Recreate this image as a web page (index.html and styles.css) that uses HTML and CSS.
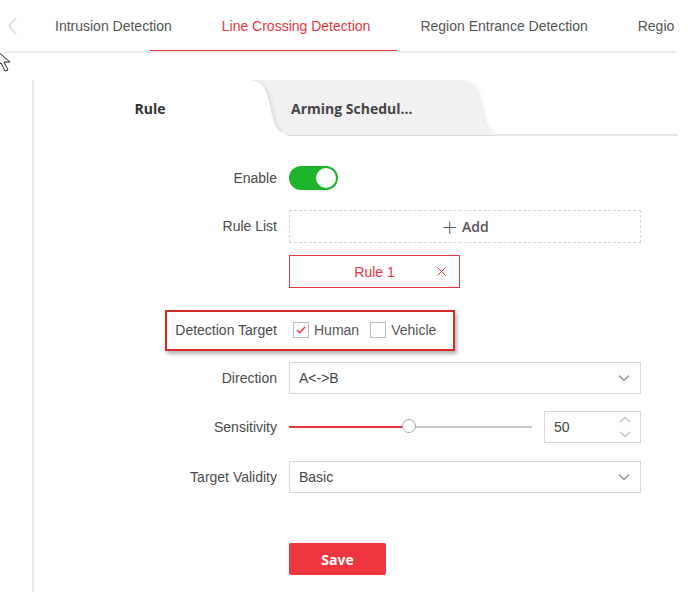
FILE: index.html
```html
<!DOCTYPE html>
<html lang="en">
<head>
    <meta charset="UTF-8">
    <title>Line Crossing Detection</title>
    <link rel="stylesheet" href="styles.css">
</head>
<body>
    <div class="page">
        <div class="nav">
            <span class="nav-prev">
                <svg width="10" height="18" viewBox="0 0 10 18"><path d="M8 1 L1 9 L8 17" fill="none" stroke="#d9d9d9" stroke-width="1.3"/></svg>
            </span>
            <div class="nav-tabs">
                <div class="nav-tab">Intrusion Detection</div>
                <div class="nav-tab active">Line Crossing Detection</div>
                <div class="nav-tab">Region Entrance Detection</div>
                <div class="nav-tab">Regio</div>
            </div>
        </div>

        <svg class="cursor" width="14" height="24" viewBox="0 0 14 24">
            <path d="M-4 0 L10 12 L4 12 L8 20 L5 21 L1 13 L-4 17 Z" fill="#fff" stroke="#222" stroke-width="1"/>
        </svg>

        <div class="panel">
            <div class="tab-bar">
                <svg class="tab-shapes" width="644" height="56" viewBox="0 0 644 56">
                    <defs>
                        <filter id="sh" x="-10%" y="-20%" width="130%" height="150%">
                            <feDropShadow dx="2" dy="1" stdDeviation="2" flood-color="#000" flood-opacity="0.12"/>
                        </filter>
                    </defs>
                    <line x1="230" y1="55" x2="644" y2="55" stroke="#e6e6e6" stroke-width="2"/>
                    <path d="M205 0 H422 C438 0 442 8 446 26 C450 48 454 54 464 55 H215 Z" fill="#f1f1f3" filter="url(#sh)"/>
                    <path d="M0 56 V5 Q0 0 5 0 H212 C228 0 232 8 236 26 C240 48 244 54 256 56 Z" fill="#fff" filter="url(#sh)"/>
                    <rect x="0" y="52" width="250" height="4" fill="#fff"/>
                </svg>
                <div class="tab tab-rule">Rule</div>
                <div class="tab tab-arming">Arming Schedul...</div>
            </div>

            <div class="form">
                <div class="row">
                    <div class="label">Enable</div>
                    <div class="switch"><span class="knob"></span></div>
                </div>

                <div class="row row-top">
                    <div class="label label-tall">Rule List</div>
                    <div class="control">
                        <div class="add-box"><span class="plus">+</span> Add</div>
                        <div class="rule-item">
                            <span>Rule 1</span>
                            <svg class="rule-close" width="9" height="9" viewBox="0 0 9 9"><path d="M0.5 0.5 L8.5 8.5 M8.5 0.5 L0.5 8.5" stroke="#e8353e" stroke-width="1"/></svg>
                        </div>
                    </div>
                </div>

                <div class="row row-target">
                    <div class="highlight"></div>
                    <div class="label">Detection Target</div>
                    <div class="checks">
                        <label class="check">
                            <span class="box checked">
                                <svg width="10" height="8" viewBox="0 0 10 8"><path d="M1 4 L3.8 6.8 L9 1" fill="none" stroke="#e8353e" stroke-width="1.4"/></svg>
                            </span>
                            Human
                        </label>
                        <label class="check">
                            <span class="box"></span>
                            Vehicle
                        </label>
                    </div>
                </div>

                <div class="row">
                    <div class="label">Direction</div>
                    <div class="select">
                        <span>A&lt;-&gt;B</span>
                        <svg width="12" height="8" viewBox="0 0 12 8"><path d="M1 1.5 L6 6.5 L11 1.5" fill="none" stroke="#888" stroke-width="1.2"/></svg>
                    </div>
                </div>

                <div class="row">
                    <div class="label">Sensitivity</div>
                    <div class="slider-wrap">
                        <div class="slider">
                            <div class="slider-fill" style="width: 50%"></div>
                            <div class="slider-knob"></div>
                        </div>
                        <div class="number">
                            <span>50</span>
                            <span class="spin">
                                <svg width="12" height="22" viewBox="0 0 12 22"><path d="M1 6 L6 1.5 L11 6" fill="none" stroke="#bbb" stroke-width="1.1"/><path d="M1 16 L6 20.5 L11 16" fill="none" stroke="#bbb" stroke-width="1.1"/></svg>
                            </span>
                        </div>
                    </div>
                </div>

                <div class="row row-validity">
                    <div class="label">Target Validity</div>
                    <div class="select">
                        <span>Basic</span>
                        <svg width="12" height="8" viewBox="0 0 12 8"><path d="M1 1.5 L6 6.5 L11 1.5" fill="none" stroke="#888" stroke-width="1.2"/></svg>
                    </div>
                </div>

                <div class="row row-save">
                    <div class="label"></div>
                    <button class="save-btn">Save</button>
                </div>
            </div>
        </div>
    </div>
</body>
</html>
```

FILE: styles.css
```css
body {
    margin: 0;
    background-color: #fff;
    font-family: 'Liberation Sans', Arial, sans-serif;
    font-size: 14px;
    color: #555;
}
.page {
    position: relative;
    width: 689px;
    height: 592px;
    overflow: hidden;
}
.nav {
    display: flex;
    align-items: center;
    width: 671px;
    height: 51px;
    margin-left: 5px;
    border-bottom: 2px solid #ececec;
    overflow: hidden;
}
.nav-prev {
    display: flex;
    width: 47px;
    padding-left: 3px;
    flex-shrink: 0;
}
.nav-tabs {
    display: flex;
    gap: 50px;
    height: 100%;
}
.nav-tab {
    position: relative;
    display: flex;
    align-items: center;
    white-space: nowrap;
    color: #555;
}
.nav-tab.active {
    color: #e8353e;
}
.nav-tab.active::after {
    content: '';
    position: absolute;
    left: -72px;
    right: -27px;
    bottom: -2px;
    height: 3px;
    background-color: #e8353e;
}
.cursor {
    position: absolute;
    left: 0;
    top: 50px;
}
.panel {
    margin: 27px 0 0 32px;
    width: 644px;
    height: 520px;
    border-left: 2px solid #e6e6e6;
}
.tab-bar {
    position: relative;
    display: flex;
    height: 56px;
    font-family: 'Open Sans', sans-serif;
    font-weight: bold;
    font-size: 14px;
    color: #333;
}
.tab-shapes {
    position: absolute;
    left: 0;
    top: 0;
}
.tab {
    position: relative;
    display: flex;
    align-items: center;
}
.tab-rule {
    width: 232px;
    justify-content: center;
}
.tab-arming {
    padding-left: 25px;
    color: #444;
}
.form {
    padding-top: 30px;
}
.row {
    position: relative;
    display: flex;
    align-items: center;
    gap: 12px;
    margin-bottom: 17px;
}
.row-top {
    align-items: flex-start;
    margin-top: 20px;
    margin-bottom: 26px;
}
.label {
    width: 243px;
    flex-shrink: 0;
    text-align: right;
    color: #4a4a4a;
}
.label-tall {
    line-height: 33px;
}
.switch {
    position: relative;
    width: 49px;
    height: 24px;
    border-radius: 12px;
    background-color: #1db42b;
}
.knob {
    position: absolute;
    right: 2px;
    top: 2px;
    width: 20px;
    height: 20px;
    border-radius: 50%;
    background-color: #fff;
}
.control {
    display: flex;
    flex-direction: column;
    gap: 12px;
    width: 352px;
}
.add-box {
    height: 31px;
    border: 1px dashed #d6d6d6;
    display: flex;
    align-items: center;
    justify-content: center;
    gap: 4px;
    font-family: 'Open Sans', sans-serif;
    font-weight: 600;
    color: #555;
}
.plus {
    font-family: 'DejaVu Sans', sans-serif;
    font-weight: 300;
    font-size: 20px;
    line-height: 1;
    color: #555;
}
.rule-item {
    position: relative;
    width: 169px;
    height: 31px;
    border: 1px solid #e8353e;
    display: flex;
    align-items: center;
    justify-content: center;
    color: #e8353e;
}
.rule-close {
    position: absolute;
    right: 13px;
    top: 11px;
}
.row-target {
    height: 32px;
    margin-bottom: 16px;
}
.highlight {
    position: absolute;
    left: 131px;
    top: -4px;
    width: 286px;
    height: 37px;
    border: 2px solid #d42a2a;
    box-shadow: 2px 3px 4px rgba(0, 0, 0, 0.3);
}
.checks {
    display: flex;
    align-items: center;
    gap: 11px;
    padding-left: 4px;
}
.check {
    display: flex;
    align-items: center;
    gap: 5px;
    color: #555;
}
.box {
    display: flex;
    align-items: center;
    justify-content: center;
    width: 14px;
    height: 14px;
    border: 1px solid #bdbdbd;
    background-color: #fff;
}
.select {
    display: flex;
    align-items: center;
    justify-content: space-between;
    box-sizing: border-box;
    width: 352px;
    height: 32px;
    padding: 0 10px 0 9px;
    border: 1px solid #d9d9d9;
    color: #444;
}
.slider-wrap {
    display: flex;
    align-items: center;
    gap: 12px;
    width: 352px;
}
.slider {
    position: relative;
    width: 243px;
    height: 2px;
    background-color: #c8c8c8;
}
.slider-fill {
    height: 2px;
    background-color: #e8353e;
}
.slider-knob {
    position: absolute;
    left: 113px;
    top: -7px;
    width: 12px;
    height: 12px;
    border: 1px solid #a8a8a8;
    border-radius: 50%;
    background-color: #fff;
}
.number {
    display: flex;
    align-items: center;
    justify-content: space-between;
    width: 97px;
    height: 32px;
    box-sizing: border-box;
    padding: 0 9px 0 9px;
    border: 1px solid #d9d9d9;
    color: #444;
}
.spin {
    display: flex;
}
.row-validity {
    margin-top: 18px;
}
.row-save {
    margin-top: 50px;
}
.save-btn {
    width: 97px;
    height: 32px;
    border: none;
    border-radius: 2px;
    background-color: #ef3640;
    color: #fff;
    font-family: 'Open Sans', sans-serif;
    font-weight: bold;
    font-size: 14px;
}
```
